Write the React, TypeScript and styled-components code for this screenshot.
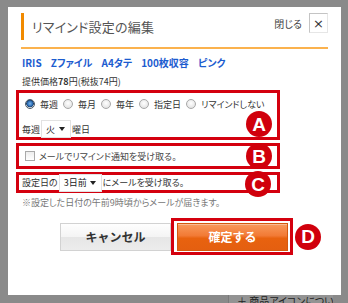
import React from "react";
import styled, { createGlobalStyle } from "styled-components";

const GlobalStyle = createGlobalStyle`
  html, body { margin: 0; padding: 0; background: #8a8a8a; }
  body { font-family: "Noto Sans CJK JP", "Noto Sans", sans-serif; font-feature-settings: "palt"; }
  * { box-sizing: border-box; }
`;

const Page = styled.div`
  width: 348px;
  height: 303px;
  overflow: hidden;
  padding: 7px 0 0 8px;
  display: flex;
  flex-direction: column;
  background: #8a8a8a;
`;

const Modal = styled.div`
  width: 333px;
  height: 288px;
  flex: none;
  background: #fff;
  padding: 6px 13px 0 13px;
  display: flex;
  flex-direction: column;
  color: #333;
`;

const Header = styled.div`
  display: flex;
  justify-content: space-between;
  align-items: flex-start;
  height: 27px;
`;

const Title = styled.h1`
  margin: 0;
  height: 27px;
  border-left: 3px solid #f18a00;
  padding-left: 8px;
  display: flex;
  align-items: center;
  font-size: 13px;
  font-weight: normal;
  color: #555;
  letter-spacing: 0.2px;
`;

const CloseGroup = styled.div`
  display: flex;
  align-items: center;
  gap: 7px;
  height: 20px;
`;

const CloseLabel = styled.span`
  font-size: 10px;
  color: #444;
`;

const CloseButton = styled.button`
  width: 19px;
  height: 20px;
  padding: 0;
  border: 1px solid #c4c4c4;
  border-right-color: #e6e6e6;
  border-bottom-color: #e6e6e6;
  background: #fff;
  color: #333;
  font-family: "DejaVu Sans", sans-serif;
  font-size: 13px;
  line-height: 1;
  display: flex;
  align-items: center;
  justify-content: center;
`;

const Divider = styled.div`
  height: 2px;
  margin-top: 7px;
  background: #fbb24e;
`;

const Links = styled.div`
  display: flex;
  gap: 9px;
  height: 14px;
  margin-top: 6px;
  align-items: center;
  padding-left: 1px;
`;

const LinkItem = styled.a`
  font-size: 10px;
  font-weight: bold;
  color: #1c5ccf;
  text-decoration: none;
`;

const Price = styled.div`
  height: 12px;
  margin-top: 6px;
  padding-left: 1px;
  display: flex;
  align-items: center;
  font-size: 9px;
  color: #333;
  b { font-weight: bold; }
`;

const RedBox = styled.div<{ $h: number; $mt: number }>`
  position: relative;
  margin-left: -5px;
  width: 264px;
  height: ${(p) => p.$h}px;
  margin-top: ${(p) => p.$mt}px;
  border: 3px solid #d4000e;
`;

const BoxInner = styled.div<{ $pl: number }>`
  height: 100%;
  padding-left: ${(p) => p.$pl}px;
  display: flex;
  flex-direction: column;
  justify-content: center;
`;

const RadioRow = styled.div`
  display: flex;
  align-items: center;
  height: 14px;
  margin-top: 4px;
  padding-left: 6px;
  gap: 5px;
`;

const Radio = styled.span<{ $checked?: boolean }>`
  width: 10px;
  height: 10px;
  border-radius: 50%;
  flex: none;
  border: 1px solid ${(p) => (p.$checked ? "#4a5a6a" : "#a8a8a8")};
  background: ${(p) =>
    p.$checked
      ? "radial-gradient(circle at 50% 45%, #7fb6ea 0, #2c6fb8 2.5px, #1d3f66 3.5px, #e8e8e8 4px)"
      : "radial-gradient(circle at 50% 40%, #ffffff 0, #e6e6e6 70%, #cfcfcf 100%)"};
`;

const OptLabel = styled.span`
  font-size: 9px;
  color: #333;
  margin-right: 0;
`;

const SubRow = styled.div`
  display: flex;
  align-items: center;
  height: 18px;
  margin-top: 9px;
  padding-left: 3px;
  font-size: 9px;
  color: #333;
`;

const Select = styled.span<{ $w: number }>`
  display: inline-flex;
  align-items: center;
  justify-content: space-between;
  width: ${(p) => p.$w}px;
  height: 18px;
  padding: 0 5px 0 4px;
  margin: 0 1px;
  border: 1px solid #e2e2e2;
  background: #fff;
  font-size: 9px;
  color: #222;
`;

const Caret = styled.span`
  width: 0;
  height: 0;
  border-left: 3.5px solid transparent;
  border-right: 3.5px solid transparent;
  border-top: 4px solid #222;
`;

const CheckRow = styled.div`
  display: flex;
  align-items: center;
  gap: 4px;
  padding-left: 6px;
  font-size: 9px;
  color: #444;
`;

const CheckBox = styled.span`
  width: 10px;
  height: 10px;
  flex: none;
  border: 1px solid #a9a9a9;
  background: linear-gradient(#ededed, #ffffff);
`;

const TextRow = styled.div`
  display: flex;
  align-items: center;
  padding-left: 3px;
  font-size: 9px;
  color: #333;
`;

const Badge = styled.span<{ $top: number; $right: number }>`
  position: absolute;
  top: ${(p) => p.$top}px;
  right: ${(p) => p.$right}px;
  width: 26px;
  height: 26px;
  border-radius: 50%;
  background: #d0000c;
  color: #fff;
  font-family: "Liberation Sans", Arial, sans-serif;
  font-weight: bold;
  font-size: 19px;
  display: flex;
  align-items: center;
  justify-content: center;
  line-height: 1;
`;

const Note = styled.div`
  height: 12px;
  margin-top: 3px;
  padding-left: 1px;
  display: flex;
  align-items: center;
  font-size: 9px;
  color: #777;
`;

const ButtonRow = styled.div`
  display: flex;
  align-items: center;
  margin-top: 10px;
  margin-left: 39px;
`;

const CancelButton = styled.button`
  width: 111px;
  height: 28px;
  border: 1px solid #d2d2d2;
  background: linear-gradient(#fefefe 0%, #f4f4f4 50%, #e6e6e6 51%, #ececec 100%);
  font-family: inherit;
  font-size: 12px;
  font-weight: bold;
  color: #333;
  padding: 0;
`;

const ConfirmFrame = styled.div`
  width: 122px;
  height: 37px;
  border: 3px solid #d4000e;
  padding: 0 2px 0 3px;
  display: flex;
  align-items: center;
`;

const ConfirmButton = styled.button`
  width: 111px;
  height: 28px;
  border: 1px solid #d4590e;
  background: linear-gradient(#f89a5c 0%, #f27a35 45%, #e8620f 55%, #e45f10 100%);
  box-shadow: inset 0 1px 0 rgba(255, 255, 255, 0.35);
  font-family: inherit;
  font-size: 12px;
  font-weight: bold;
  color: #fff;
  padding: 0;
`;

const SideBadge = styled.span`
  width: 26px;
  height: 26px;
  margin-left: 2px;
  border-radius: 50%;
  background: #d0000c;
  color: #fff;
  font-family: "Liberation Sans", Arial, sans-serif;
  font-weight: bold;
  font-size: 19px;
  display: flex;
  align-items: center;
  justify-content: center;
  line-height: 1;
`;

const Footer = styled.div`
  height: 8px;
  overflow: hidden;
  margin-left: 220px;
  width: 105px;
  background: #939393;
  border-left: 1px solid #7a7a7a;
  padding-left: 8px;
`;

const FooterText = styled.div`
  font-size: 10px;
  line-height: 1;
  margin-top: 1px;
  color: #222;
  white-space: nowrap;
`;

const options = ["毎週", "毎月", "毎年", "指定日", "リマインドしない"];
const links = ["IRIS", "Zファイル", "A4タテ", "100枚収容", "ピンク"];

export default function App() {
  return (
    <>
      <GlobalStyle />
      <Page>
        <Modal>
          <Header>
            <Title>リマインド設定の編集</Title>
            <CloseGroup>
              <CloseLabel>閉じる</CloseLabel>
              <CloseButton>×</CloseButton>
            </CloseGroup>
          </Header>
          <Divider />
          <Links>
            {links.map((l) => (
              <LinkItem key={l}>{l}</LinkItem>
            ))}
          </Links>
          <Price>
            提供価格<b>78</b>円(税抜74円)
          </Price>
          <RedBox $h={50} $mt={3}>
            <RadioRow>
              {options.map((o, i) => (
                <React.Fragment key={o}>
                  <Radio $checked={i === 0} />
                  <OptLabel>{o}</OptLabel>
                </React.Fragment>
              ))}
            </RadioRow>
            <SubRow>
              毎週
              <Select $w={30}>
                火<Caret />
              </Select>
              曜日
            </SubRow>
            <Badge $top={18} $right={5}>A</Badge>
          </RedBox>
          <RedBox $h={26} $mt={3}>
            <BoxInner $pl={0}>
              <CheckRow>
                <CheckBox />
                メールでリマインド通知を受け取る。
              </CheckRow>
            </BoxInner>
            <Badge $top={-3} $right={5}>B</Badge>
          </RedBox>
          <RedBox $h={21} $mt={3}>
            <BoxInner $pl={0}>
              <TextRow>
                設定日の
                <Select $w={43}>
                  3日前<Caret />
                </Select>
                にメールを受け取る。
              </TextRow>
            </BoxInner>
            <Badge $top={-4} $right={6}>C</Badge>
          </RedBox>
          <Note>※設定した日付の午前9時頃からメールが届きます。</Note>
          <ButtonRow>
            <CancelButton>キャンセル</CancelButton>
            <ConfirmFrame>
              <ConfirmButton>確定する</ConfirmButton>
            </ConfirmFrame>
            <SideBadge>D</SideBadge>
          </ButtonRow>
        </Modal>
        <Footer>
          <FooterText>＋ 商品アイコンについて</FooterText>
        </Footer>
      </Page>
    </>
  );
}
